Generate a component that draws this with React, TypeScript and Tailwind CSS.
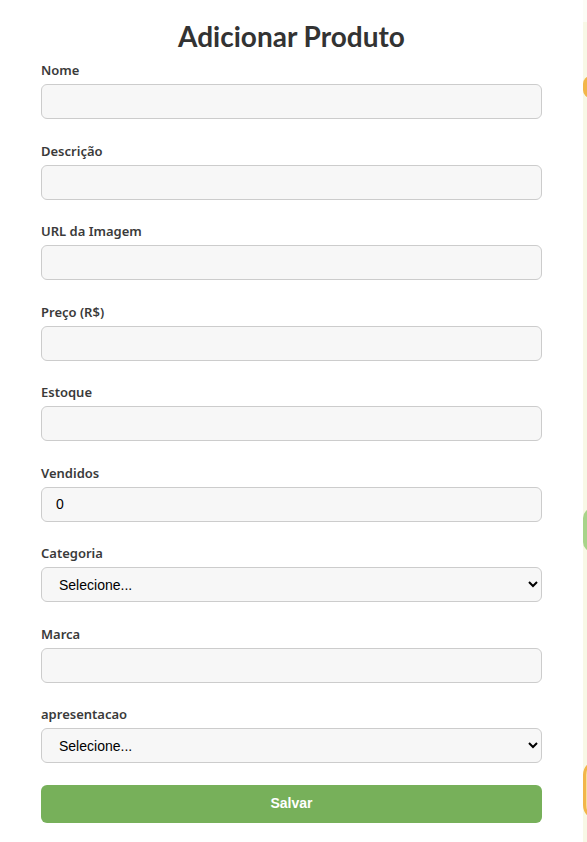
import React from 'react'

const fields = [
  { label: 'Nome', type: 'text' },
  { label: 'Descrição', type: 'text' },
  { label: 'URL da Imagem', type: 'text' },
  { label: 'Preço (R$)', type: 'text' },
  { label: 'Estoque', type: 'text' },
  { label: 'Vendidos', type: 'text', value: '0' },
  { label: 'Categoria', type: 'select' },
  { label: 'Marca', type: 'text' },
  { label: 'apresentacao', type: 'select' },
]

export default function App() {
  return (
    <div className="flex h-[842px] w-[587px] overflow-hidden bg-[#f8f8e6]">
      <main className="h-full w-[583px] shrink-0 bg-white px-[41px] pt-[18px]">
        <h1 className="text-center text-[28px] font-bold leading-[36px] text-[#333] [font-family:Lato,sans-serif]">
          Adicionar Produto
        </h1>
        <form className="mt-[6px]" onSubmit={(e) => e.preventDefault()}>
          {fields.map((f) => (
            <div key={f.label} className="mb-[21.5px]">
              <label className="mb-[4px] block h-[20px] text-[13px] font-semibold leading-[20px] text-[#3a3a3a] [font-family:'Noto_Sans',sans-serif]">
                {f.label}
              </label>
              {f.type === 'select' ? (
                <select className="h-[35px] w-full rounded-[6px] border border-[#ccc] bg-[#f7f7f7] pl-[13px] pr-[8px] text-[14px] text-black [font-family:'Liberation_Sans',Arial,sans-serif]">
                  <option>Selecione...</option>
                </select>
              ) : (
                <input
                  type="text"
                  defaultValue={f.value}
                  className="h-[35px] w-full rounded-[6px] border border-[#ccc] bg-[#f7f7f7] px-[14px] text-[14px] text-black [font-family:'Liberation_Sans',Arial,sans-serif]"
                />
              )}
            </div>
          ))}
          <button
            type="submit"
            className="h-[38px] w-full rounded-[6px] bg-[#77b05a] text-[14px] font-bold text-white [font-family:'Liberation_Sans',Arial,sans-serif]"
          >
            Salvar
          </button>
        </form>
      </main>
      <aside className="relative h-full flex-1">
        <div className="absolute left-0 top-0 h-[22px] w-full bg-[#fcfcf6]" />
        <div className="absolute left-0 top-[76px] h-[22px] w-[8px] rounded-l-full bg-[#f2b64a]" />
        <div className="absolute left-0 top-[508px] h-[44px] w-[10px] rounded-l-full bg-[#a8d48a]" />
        <div className="absolute left-0 top-[760px] h-[60px] w-[30px] rounded-full border-[3px] border-[#f2b64a] bg-[#f7dea0]" />
      </aside>
    </div>
  )
}
